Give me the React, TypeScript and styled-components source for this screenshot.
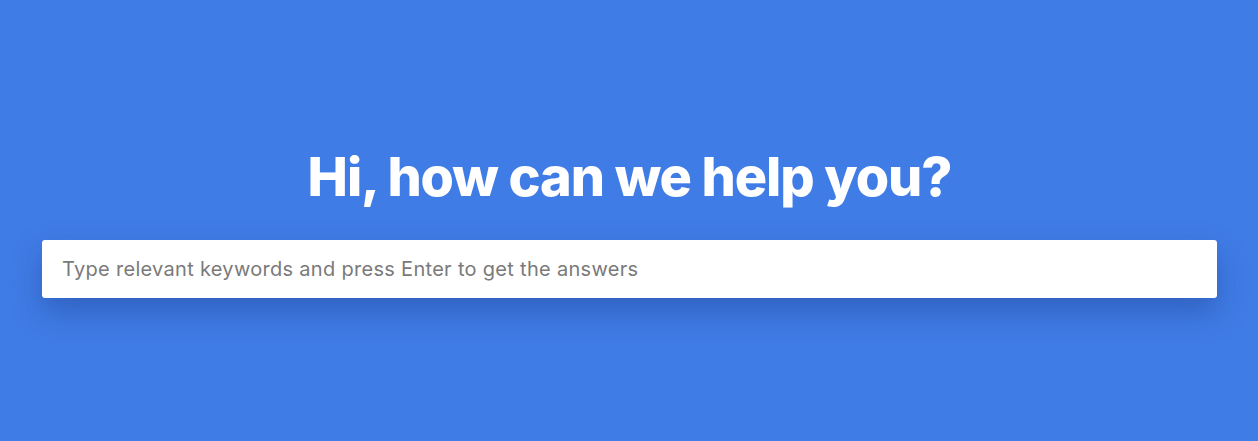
import React from "react";
import styled, { createGlobalStyle } from "styled-components";

const Global = createGlobalStyle`
  html, body { margin: 0; padding: 0; background: #407ce6; }
  * { box-sizing: border-box; }
`;

const Hero = styled.section`
  height: 441px;
  background: #407ce6;
  display: flex;
  flex-direction: column;
  align-items: center;
  padding: 142px 41px 0 42px;
`;

const Title = styled.h1`
  margin: 0;
  font-family: "Inter", "Lato", sans-serif;
  font-weight: 800;
  font-size: 54px;
  line-height: 70px;
  color: #ffffff;
  letter-spacing: -1.1px;
`;

const SearchBox = styled.input`
  margin-top: 28px;
  width: 100%;
  height: 58px;
  border: none;
  border-radius: 3px;
  background: #fff;
  padding: 0 20px;
  font-family: "Inter", "Lato", sans-serif;
  font-weight: 400;
  font-size: 20px;
  letter-spacing: 0.3px;
  color: #333;
  outline: none;
  box-shadow: 0 14px 30px rgba(20, 50, 120, 0.35);
  &::placeholder { color: #7a7a7a; }
`;

export default function App() {
  return (
    <>
      <Global />
      <Hero>
        <Title>Hi, how can we help you?</Title>
        <SearchBox placeholder="Type relevant keywords and press Enter to get the answers" />
      </Hero>
    </>
  );
}
